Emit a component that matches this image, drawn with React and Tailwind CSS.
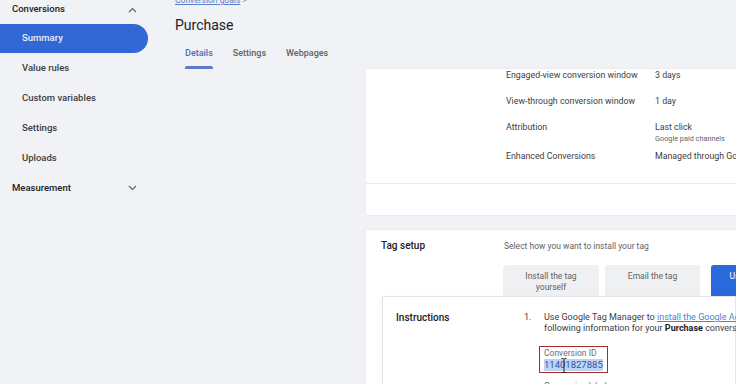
import React from "react";

const ChevronUp = () => (
  <svg width="9" height="6" viewBox="0 0 9 6" fill="none" stroke="#5f6368" strokeWidth="1.2">
    <path d="M1 5 L4.5 1.5 L8 5" />
  </svg>
);
const ChevronDown = () => (
  <svg width="9" height="6" viewBox="0 0 9 6" fill="none" stroke="#5f6368" strokeWidth="1.2">
    <path d="M1 1 L4.5 4.5 L8 1" />
  </svg>
);

function SideItem({ label, active }) {
  return active ? (
    <div className="h-[29px] w-[148px] shrink-0 rounded-r-full bg-[#3267d6] flex items-center pl-[22px] text-[9.5px] font-medium text-[#e8effd]">
      {label}
    </div>
  ) : (
    <div className="h-[30px] shrink-0 flex items-center pl-[22px] text-[9.5px] font-medium text-[#3c4043]">
      {label}
    </div>
  );
}

export default function App() {
  return (
    <div
      className="w-[736px] h-[384px] overflow-hidden bg-[#f0f2f5] flex"
      style={{ fontFamily: "Roboto, 'Noto Sans', Arial, sans-serif" }}
    >
      {/* Sidebar */}
      <div className="w-[160px] shrink-0 flex flex-col">
        <div className="h-[24px] shrink-0 pb-[5px] flex items-center justify-between pl-[12px] pr-[23px] text-[9.5px] font-medium text-[#202124]">
          <span>Conversions</span>
          <ChevronUp />
        </div>
        <SideItem label="Summary" active />
        <SideItem label="Value rules" />
        <SideItem label="Custom variables" />
        <SideItem label="Settings" />
        <SideItem label="Uploads" />
        <div className="h-[30px] shrink-0 flex items-center justify-between pl-[12px] pr-[23px] text-[9.5px] font-medium text-[#202124]">
          <span>Measurement</span>
          <ChevronDown />
        </div>
      </div>

      {/* Main */}
      <div className="flex-1 min-w-0 flex flex-col">
        {/* Header */}
        <div className="h-[69px] shrink-0 pl-[15px] flex flex-col">
          <div className="-mt-[5px] h-[10px] leading-[10px] text-[8.5px] text-[#5b7fd0] whitespace-nowrap">
            <span className="underline">Conversion goals</span>
            <span className="ml-[2px] text-[#80868b]">&gt;</span>
          </div>
          <div className="mt-[10px] h-[20px] leading-[20px] text-[14px] text-[#202124]">Purchase</div>
          <div className="mt-[5px] flex items-start gap-[20px] pl-[10px] text-[9px] font-medium">
            <div className="flex flex-col items-stretch">
              <span className="pt-[7px] leading-[12px] text-[#4a6cc0]">Details</span>
              <span className="mt-[7px] h-[3px] rounded-t-[2px] bg-[#5b7ac8]" />
            </div>
            <span className="pt-[7px] leading-[12px] text-[#5f6368]">Settings</span>
            <span className="pt-[7px] leading-[12px] text-[#5f6368]">Webpages</span>
          </div>
        </div>

        {/* Content */}
        <div className="pl-[206px] flex flex-col">
          {/* Card 1 */}
          <div className="bg-white h-[146px] flex flex-col shadow-[0_0_2px_rgba(0,0,0,0.08)]">
            <div className="pl-[140px] flex flex-col text-[8.8px] text-[#3c4043] whitespace-nowrap">
              <div className="flex leading-[12px]">
                <span className="w-[149px] shrink-0">Engaged-view conversion window</span>
                <span className="shrink-0">3 days</span>
              </div>
              <div className="flex leading-[12px] mt-[14px]">
                <span className="w-[149px] shrink-0">View-through conversion window</span>
                <span className="shrink-0">1 day</span>
              </div>
              <div className="flex mt-[14px]">
                <span className="w-[149px] shrink-0 leading-[12px]">Attribution</span>
                <div className="flex flex-col shrink-0">
                  <span className="leading-[12px]">Last click</span>
                  <span className="mt-[1px] leading-[10px] text-[7.3px] text-[#5f6368]">Google paid channels</span>
                </div>
              </div>
              <div className="flex leading-[12px] mt-[6px]">
                <span className="w-[149px] shrink-0">Enhanced Conversions</span>
                <span className="shrink-0">Managed through Google Ads</span>
              </div>
            </div>
            <div className="mt-[21px] h-px bg-[#e8eaed]" />
          </div>

          {/* Card 2 */}
          <div className="mt-[15px] bg-white h-[200px] flex flex-col shadow-[0_0_2px_rgba(0,0,0,0.08)]">
            <div className="pt-[9px] flex items-center whitespace-nowrap">
              <span className="w-[138px] shrink-0 pl-[15px] text-[10px] leading-[14px] font-medium text-[#202124]">Tag setup</span>
              <span className="shrink-0 text-[8.5px] leading-[14px] text-[#5f6368]">Select how you want to install your tag</span>
            </div>
            <div className="mt-[12px] pl-[137px] flex items-start whitespace-nowrap">
              <div className="w-[96px] shrink-0 h-[31px] bg-[#eff0f2] rounded-t-[3px] flex flex-col items-center pt-[6px] text-[8.5px] leading-[11px] text-[#5f6368]">
                <span>Install the tag</span>
                <span>yourself</span>
              </div>
              <div className="ml-[6px] w-[95px] shrink-0 h-[31px] bg-[#eff0f2] rounded-t-[3px] flex flex-col items-center pt-[6px] text-[8.5px] leading-[11px] text-[#5f6368]">
                <span>Email the tag</span>
              </div>
              <div className="ml-[11px] w-[132px] shrink-0 h-[31px] bg-[#2a69db] rounded-t-[3px] flex flex-col items-center pt-[6px] text-[8.5px] leading-[11px] text-white">
                <span>Use Google Tag Manager</span>
              </div>
            </div>
            <div className="ml-[16px] bg-white border border-[#e3e5e8] shadow-[0_1px_3px_rgba(0,0,0,0.08)] h-[120px] flex whitespace-nowrap">
              <span className="w-[141px] shrink-0 pl-[13px] pt-[14px] text-[10px] leading-[14px] font-medium text-[#202124]">Instructions</span>
              <div className="pt-[15px] flex shrink-0">
                <span className="w-[20px] shrink-0 text-[9px] leading-[11px] text-[#3c4043]">1.</span>
                <div className="flex flex-col shrink-0 text-[9px] leading-[11px] text-[#3c4043]">
                  <span>
                    Use Google Tag Manager to{" "}
                    <span className="underline text-[#4f7fd6]">install the Google Ads tag</span> and enter the
                  </span>
                  <span>
                    following information for your <span className="font-bold text-[#202124]">Purchase</span> conversion action:
                  </span>
                  <div className="relative mt-[12px] -ml-[5px] self-start border border-[#a0302a] px-[4px] pt-[1px] pb-[1px] flex flex-col">
                    <span className="text-[8.5px] leading-[11px] text-[#6b6f74]">Conversion ID</span>
                    <span className="text-[9.5px] leading-[12px] text-[#2d56a6] bg-[#bed2f4] self-start">11401827885</span>
                    <svg className="absolute left-[21px] top-[11px]" width="6" height="15" viewBox="0 0 6 15" fill="none" stroke="#222" strokeWidth="1">
                      <path d="M0.5 0.5 H2.5 M3.5 0.5 H5.5 M3 1 V14 M0.5 14.5 H2.5 M3.5 14.5 H5.5" />
                    </svg>
                  </div>
                  <span className="mt-[8px] text-[8.5px] leading-[11px] text-[#6b6f74]">Conversion label</span>
                </div>
              </div>
            </div>
          </div>
        </div>
      </div>
    </div>
  );
}
